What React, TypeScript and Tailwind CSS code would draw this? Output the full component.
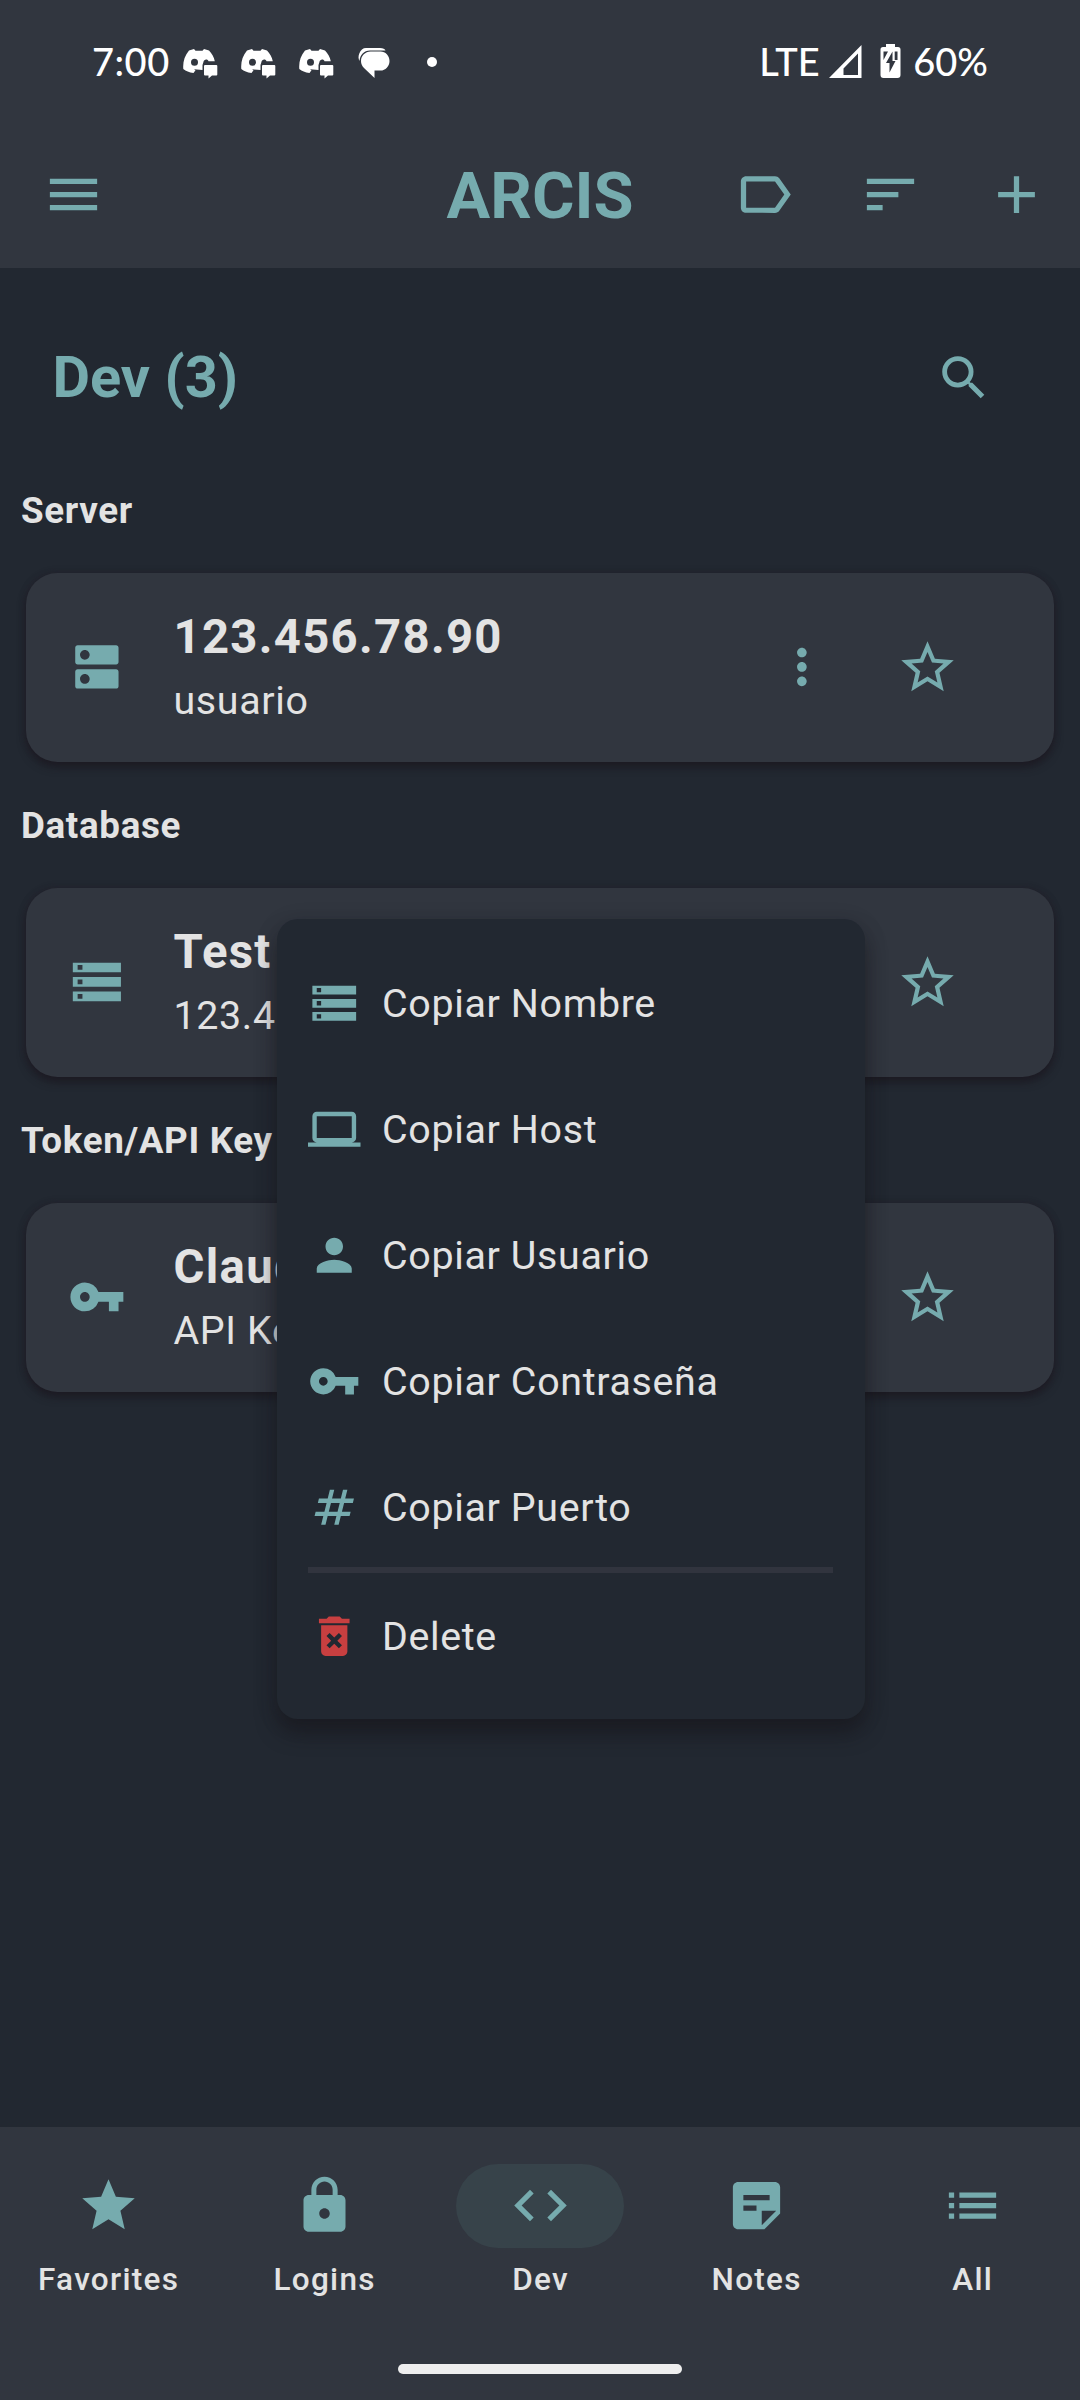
import React from 'react';
import {
  MdAdd, MdCode, MdDeleteForever, MdDns, MdLabelOutline, MdLaptop, MdList, MdLock, MdMenu, MdMoreVert,
  MdNumbers, MdPerson, MdSearch, MdSort, MdStar, MdStarBorder, MdStickyNote2, MdStorage, MdVpnKey,
} from 'react-icons/md';
import type { IconType } from 'react-icons';

function DiscordNotification() {
  return (
    <svg width="36" height="31" viewBox="0 0 36 31" fill="white">
      <path
        fillRule="evenodd"
        d="M6 1.500 11 0l1.500 1.700h7L21 0l5 1.500C29 5 31 8 31.800 12.300H25.500C25 10 21 9.500 20.300 13.500L19.500 16v5l-8.500-.7 1.500 1L10.500 24C6 23.500 3 22 .3 20-.3 13 1.500 7 6 1.500zM11.500 9.800a3.500 3.500 0 1 0 0 7 3.500 3.500 0 0 0 0-7z"
      />
      <path d="M22 16h11.300a1 1 0 0 1 1 1v8.500a1 1 0 0 1-1 1H29l-3.500 3v-3H22a1 1 0 0 1-1-1V17a1 1 0 0 1 1-1z" />
    </svg>
  );
}

function MessagesNotification() {
  return (
    <svg width="32" height="32" viewBox="0 0 32 32" fill="white">
      <path d="M8 1h14c3 0 5 1 5.500 2.500H12C6 3.500 2 8 1.500 14 .3 12 .2 9 1.300 6.500 2.500 3 5 1 8 1z" />
      <path d="M12.500 4.500h10c5 0 9 4.200 9 9.400s-4 9.600-9 9.600h-6V31L6 21c-2-2-3-4.300-3-7 0-5.200 4.300-9.500 9.500-9.500z" />
    </svg>
  );
}

function StatusBar() {
  return (
    <div className="flex h-[121px] items-center justify-between pl-[92px] pr-[92px] font-[Lato,sans-serif] text-[38px] font-medium leading-none text-white">
      <div className="flex items-center">
        <span className="w-[91px] whitespace-nowrap tracking-[0.500px]">7:00</span>
        <span className="flex gap-[22px] pt-[8px]"><DiscordNotification /><DiscordNotification /><DiscordNotification /></span>
        <span className="ml-[23px] pt-[5px]"><MessagesNotification /></span>
        <span className="ml-[37px] mt-[3px] size-[10px] rounded-full bg-white" />
      </div>
      <div className="flex items-center">
        <span className="w-[70px]">LTE</span>
        <svg className="mt-[2px]" width="33" height="33" viewBox="0 0 33 33">
          <path fillRule="evenodd" fill="white" d="M0 33 32.500 0v33zM29 8.500 14.500 23.500V30H29z" />
        </svg>
        <svg className="ml-[18px]" width="21" height="34" viewBox="0 0 21 34">
          <path fill="white" d="M6 0h9v3h3a2.500 2.500 0 0 1 2.500 2.500V31a3 3 0 0 1-3 3h-14a3 3 0 0 1-3-3V5.500A2.500 2.500 0 0 1 3 3h3z" />
          <path fill="#31363f" d="M3.500 7.500H8l-4.500 8.500zM12.500 7.500 6 19h3.500v9.500L15.500 17h-3zM14.700 7.500h2.800V16h-2.800z" />
        </svg>
        <span className="ml-[12px] whitespace-nowrap">60%</span>
      </div>
    </div>
  );
}

function IconButton({ icon: Icon, size = 63 }: { icon: IconType; size?: number }) {
  return (
    <button className="flex h-[126px] w-[126px] shrink-0 items-center justify-center text-[#76abae]">
      <Icon size={size} />
    </button>
  );
}

function AppBar() {
  return (
    <header className="h-[268px] shrink-0 bg-[#31363f]">
      <StatusBar />
      <div className="grid h-[147px] grid-cols-[1fr_auto_1fr] items-center">
        <div className="flex pl-[10px]"><IconButton icon={MdMenu} /></div>
        <h1 className="pt-[4px] text-[65px] font-bold leading-none text-[#76abae]">ARCIS</h1>
        <div className="flex justify-end pr-[0.500px]">
          <IconButton icon={MdLabelOutline} />
          <IconButton icon={MdSort} />
          <IconButton icon={MdAdd} />
        </div>
      </div>
    </header>
  );
}

interface Entry { section: string; icon: IconType; title: string; subtitle: string }

const entries: Entry[] = [
  { section: 'Server', icon: MdDns, title: '123.456.78.90', subtitle: 'usuario' },
  { section: 'Database', icon: MdStorage, title: 'Test', subtitle: '123.456.78.90' },
  { section: 'Token/API Key', icon: MdVpnKey, title: 'Claude', subtitle: 'API Key' },
];

function EntrySection({ section, icon: Icon, title, subtitle }: Entry) {
  return (
    <section className="h-[315px]">
      <h3 className="flex h-[126px] items-center pl-[21px] pt-[4px] text-[36.750px] font-bold leading-none tracking-[0.660px]">{section}</h3>
      <div className="mx-[26.250px] flex h-[189px] items-center rounded-[31.500px] bg-[#31363f] pl-[42px] shadow-[0_5px_8px_rgba(24,20,28,0.65),0_0_6px_rgba(36,34,46,0.9)]">
        <Icon size={57.75} className="shrink-0 text-[#76abae]" />
        <div className="ml-[47.500px] flex flex-1 flex-col pt-[4px]">
          <span className="text-[47.250px] font-bold leading-[63px] tracking-[1.310px]">{title}</span>
          <span className="text-[39.375px] leading-[63px] tracking-[0.660px]">{subtitle}</span>
        </div>
        <IconButton icon={MdMoreVert} size={57.75} />
        <IconButton icon={MdStarBorder} />
        <div className="w-[63px]" />
      </div>
    </section>
  );
}

const actions: { icon: IconType; label: string }[] = [
  { icon: MdStorage, label: 'Copiar Nombre' },
  { icon: MdLaptop, label: 'Copiar Host' },
  { icon: MdPerson, label: 'Copiar Usuario' },
  { icon: MdVpnKey, label: 'Copiar Contraseña' },
  { icon: MdNumbers, label: 'Copiar Puerto' },
];

function MenuItem({ icon: Icon, label, danger = false }: { icon: IconType; label: string; danger?: boolean }) {
  return (
    <div className="flex h-[126px] items-center gap-[21.500px]">
      <Icon size={52.5} className={danger ? 'text-[#c83f40]' : 'text-[#76abae]'} />
      <span className="whitespace-nowrap pt-[2px] text-[39.375px] leading-none tracking-[0.660px]">{label}</span>
    </div>
  );
}

function ContextMenu() {
  return (
    <div className="absolute left-[277px] top-[919px] h-[800px] w-[587.500px] rounded-[21px] bg-[#222831] pl-[31px] pr-[32px] pt-[21px] shadow-[0_14px_20px_rgba(22,20,26,0.55),0_4px_22px_rgba(22,20,30,0.15)]">
      {actions.map((a) => <MenuItem key={a.label} {...a} />)}
      <div className="-mt-[3px] h-[6px] bg-[#31343e]" />
      <MenuItem icon={MdDeleteForever} label="Delete" danger />
    </div>
  );
}

const tabs: { icon: IconType; label: string; active?: boolean }[] = [
  { icon: MdStar, label: 'Favorites' },
  { icon: MdLock, label: 'Logins' },
  { icon: MdCode, label: 'Dev', active: true },
  { icon: MdStickyNote2, label: 'Notes' },
  { icon: MdList, label: 'All' },
];

function BottomNav() {
  return (
    <nav className="flex h-[273px] shrink-0 flex-col items-center bg-[#31363f] pt-[36.500px]">
      <div className="grid w-full grid-cols-5">
        {tabs.map(({ icon: Icon, label, active }) => (
          <div key={label} className="flex flex-col items-center">
            <div className={active ? 'flex h-[84px] w-[168px] items-center justify-center rounded-full bg-[#37434a]' : 'flex h-[84px] w-[168px] items-center justify-center'}>
              <Icon size={63} className="text-[#76abae]" />
            </div>
            <span className="mt-[11.500px] pl-[1.310px] text-[31.500px] font-medium leading-[42px] tracking-[1.310px]">{label}</span>
          </div>
        ))}
      </div>
      <div className="mt-[63px] h-[10px] w-[284px] rounded-full bg-[#eeeeee]" />
    </nav>
  );
}

export default function App() {
  return (
    <div className="relative flex h-[2400px] w-[1080px] flex-col overflow-hidden bg-[#222831] font-[Roboto,sans-serif] text-[#e3e3e3]">
      <AppBar />
      <main className="flex-1">
        <div className="flex h-[178.500px] items-start justify-between pl-[52.500px] pr-[53px] pt-[46.500px]">
          <h2 className="text-[57.750px] font-bold leading-[125px] text-[#76abae]">Dev (3)</h2>
          <IconButton icon={MdSearch} size={57.75} />
        </div>
        {entries.map((e) => <EntrySection key={e.section} {...e} />)}
      </main>
      <BottomNav />
      <ContextMenu />
    </div>
  );
}
